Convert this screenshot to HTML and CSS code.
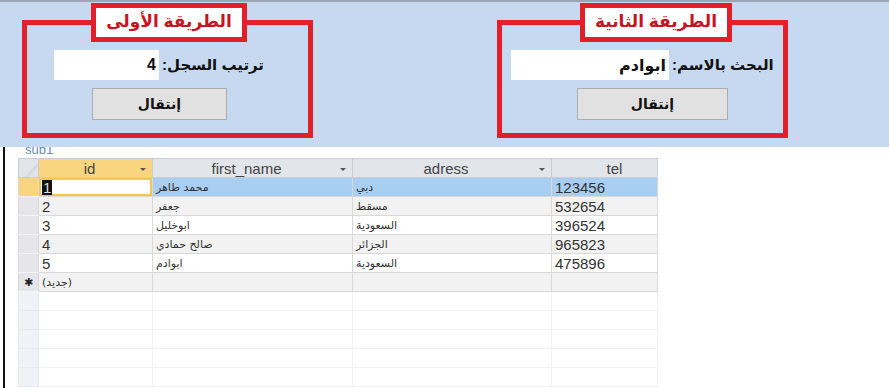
FILE: index.html
```html
<!DOCTYPE html>
<html>
    <head>
        <meta charset="utf-8">
        <link rel="stylesheet" href="styles.css">
    </head>
    <body>
        <div class="panel">
            <fieldset class="frame frame-first">
                <legend>الطريقة الأولى</legend>
                <div class="field">
                    <input type="text" class="box" value="4">
                    <label dir="rtl">ترتيب السجل:</label>
                </div>
                <button class="go">إنتقال</button>
            </fieldset>
            <fieldset class="frame frame-second">
                <legend>الطريقة الثانية</legend>
                <div class="field">
                    <input type="text" class="box" value="ابوادم">
                    <label dir="rtl">البحث بالاسم:</label>
                </div>
                <button class="go">إنتقال</button>
            </fieldset>
        </div>
        <div class="lower">
            <div class="sub">
                <div class="sub-name"><span>sub1</span></div>
                <table class="sheet">
                    <colgroup>
                        <col class="c-sel">
                        <col class="c-id">
                        <col class="c-name">
                        <col class="c-adr">
                        <col class="c-tel">
                    </colgroup>
                    <tr class="head">
                        <th class="sel"></th>
                        <th class="active">id<span class="arrow"></span></th>
                        <th>first_name<span class="arrow"></span></th>
                        <th>adress<span class="arrow"></span></th>
                        <th class="tel-head">tel</th>
                    </tr>
                    <tr class="current">
                        <td class="sel"></td>
                        <td class="num edit"><span class="caret">1</span></td>
                        <td class="ar">محمد طاهر</td>
                        <td class="ar">دبي</td>
                        <td class="num">123456</td>
                    </tr>
                    <tr class="odd">
                        <td class="sel"></td>
                        <td class="num">2</td>
                        <td class="ar">جعفر</td>
                        <td class="ar">مسقط</td>
                        <td class="num">532654</td>
                    </tr>
                    <tr>
                        <td class="sel"></td>
                        <td class="num">3</td>
                        <td class="ar">ابوخليل</td>
                        <td class="ar">السعودية</td>
                        <td class="num">396524</td>
                    </tr>
                    <tr class="odd">
                        <td class="sel"></td>
                        <td class="num">4</td>
                        <td class="ar">صالح حمادي</td>
                        <td class="ar">الجزائر</td>
                        <td class="num">965823</td>
                    </tr>
                    <tr>
                        <td class="sel"></td>
                        <td class="num">5</td>
                        <td class="ar">ابوادم</td>
                        <td class="ar">السعودية</td>
                        <td class="num">475896</td>
                    </tr>
                    <tr class="odd">
                        <td class="sel star">&#x2731;</td>
                        <td class="ar new">(جديد)</td>
                        <td></td>
                        <td></td>
                        <td></td>
                    </tr>
                    <tr class="blank"><td class="sel"></td><td></td><td></td><td></td><td></td></tr>
                    <tr class="blank"><td class="sel"></td><td></td><td></td><td></td><td></td></tr>
                    <tr class="blank"><td class="sel"></td><td></td><td></td><td></td><td></td></tr>
                    <tr class="blank"><td class="sel"></td><td></td><td></td><td></td><td></td></tr>
                    <tr class="blank"><td class="sel"></td><td></td><td></td><td></td><td></td></tr>
                </table>
            </div>
        </div>
    </body>
</html>
```

FILE: styles.css
```css
body {
    margin: 0;
    overflow: hidden;
    font-family: "Liberation Sans", "DejaVu Sans", sans-serif;
    background-color: white;
}
.panel {
    display: flex;
    gap: 184px;
    height: 147px;
    box-sizing: border-box;
    padding: 1px 0 0 22px;
    border-top: 2px solid #9aa6b6;
    background-color: #c6d9f0;
}
.frame {
    width: 291px;
    height: 135px;
    box-sizing: border-box;
    margin: 0;
    padding: 8px 0 0 0;
    border: 5px solid #e3202a;
    min-width: 0;
}
.frame legend {
    display: flex;
    justify-content: center;
    align-items: center;
    box-sizing: border-box;
    height: 39px;
    padding: 0 0 3px 0;
    border: 5px solid #e3202a;
    background-color: white;
    color: #c8141f;
    font-weight: bold;
    font-size: 17px;
    white-space: nowrap;
}
.frame-first legend {
    width: 156px;
    margin-left: 64px;
}
.frame-second legend {
    width: 152px;
    margin-left: 78px;
}
.field {
    display: flex;
    align-items: center;
}
.frame-first .field {
    padding-left: 27px;
}
.frame-second .field {
    padding-left: 9px;
}
.box {
    height: 30px;
    box-sizing: border-box;
    border: none;
    padding: 0 3px 0 0;
    background-color: white;
    font-family: "Liberation Sans", "DejaVu Sans", sans-serif;
    font-weight: bold;
    font-size: 16px;
    color: #111;
    text-align: right;
}
.frame-first .box {
    width: 105px;
}
.frame-second .box {
    width: 158px;
}
.field label {
    margin-left: 3px;
    font-weight: bold;
    font-size: 15px;
    color: #111;
    white-space: nowrap;
}
.go {
    display: block;
    height: 32px;
    margin-top: 8px;
    background-color: #e1e1e1;
    border: 1px solid #adadad;
    font-family: "Liberation Sans", "DejaVu Sans", sans-serif;
    font-weight: bold;
    font-size: 14px;
    color: #111;
}
.frame-first .go {
    width: 135px;
    margin-left: 65px;
}
.frame-second .go {
    width: 151px;
    margin-left: 75px;
}
.lower {
    height: 241px;
    margin-left: 3px;
    border-left: 2px solid #111;
}
.sub {
    padding-left: 13px;
}
.sub-name {
    height: 11px;
    overflow: hidden;
    padding-left: 7px;
    font-size: 13px;
    color: #6a8bbf;
}
.sub-name span {
    display: block;
    line-height: 13px;
    margin-top: -4px;
}
.sheet {
    border-collapse: collapse;
    table-layout: fixed;
    width: 639px;
    border-right: 1px solid #cfd3d8;
}
.c-sel { width: 20px; }
.c-id { width: 114px; }
.c-name { width: 200px; }
.c-adr { width: 199px; }
.c-tel { width: 106px; }
.sheet th,
.sheet td {
    height: 18px;
    padding: 0;
    border: 1px solid #d9d9d9;
    white-space: nowrap;
    overflow: hidden;
    line-height: 17px;
}
.sheet th {
    font-weight: normal;
    font-size: 15px;
    color: #444;
    background-color: #e2e6eb;
    border-color: #c9ced6;
    text-align: center;
}
.sheet th.active {
    background-color: #fad580;
}
.sheet th.sel {
    background: linear-gradient(135deg, #e2e6eb 60%, #cdd2d9 60%, #e2e6eb 75%);
}
.sheet th.tel-head {
    padding-left: 20px;
}
.arrow {
    float: right;
    margin: 8px 6px 0 0;
    border-left: 3px solid transparent;
    border-right: 3px solid transparent;
    border-top: 3px solid #555;
}
.sheet td {
    color: #333;
    padding-left: 2px;
}
.sheet td.num {
    font-size: 15px;
    padding-left: 3px;
}
.sheet td.ar {
    font-family: "DejaVu Sans", sans-serif;
    font-size: 11px;
    padding-left: 3px;
}
.sheet td.sel {
    background-color: #e5e5ea;
    border-color: #f4f4f6 #d9d9d9;
    padding: 0;
    text-align: center;
    font-size: 11px;
    color: #222;
}
.odd td {
    background-color: #f2f2f2;
}
.current td {
    background-color: #a8cef1;
}
.current td.sel {
    background-color: #fad580;
}
.current td.edit {
    background-color: white;
    box-shadow: inset 0 0 0 2px #f6c74c;
}
.caret {
    display: inline-block;
    line-height: 15px;
    background-color: #111;
    color: #ddd;
    padding: 0 1px;
}
.blank td {
    background-color: white;
    border-color: #f1f1f1;
}
.blank td.sel {
    background-color: #f1f1f8;
    border-color: #e8e8f0;
}
```
